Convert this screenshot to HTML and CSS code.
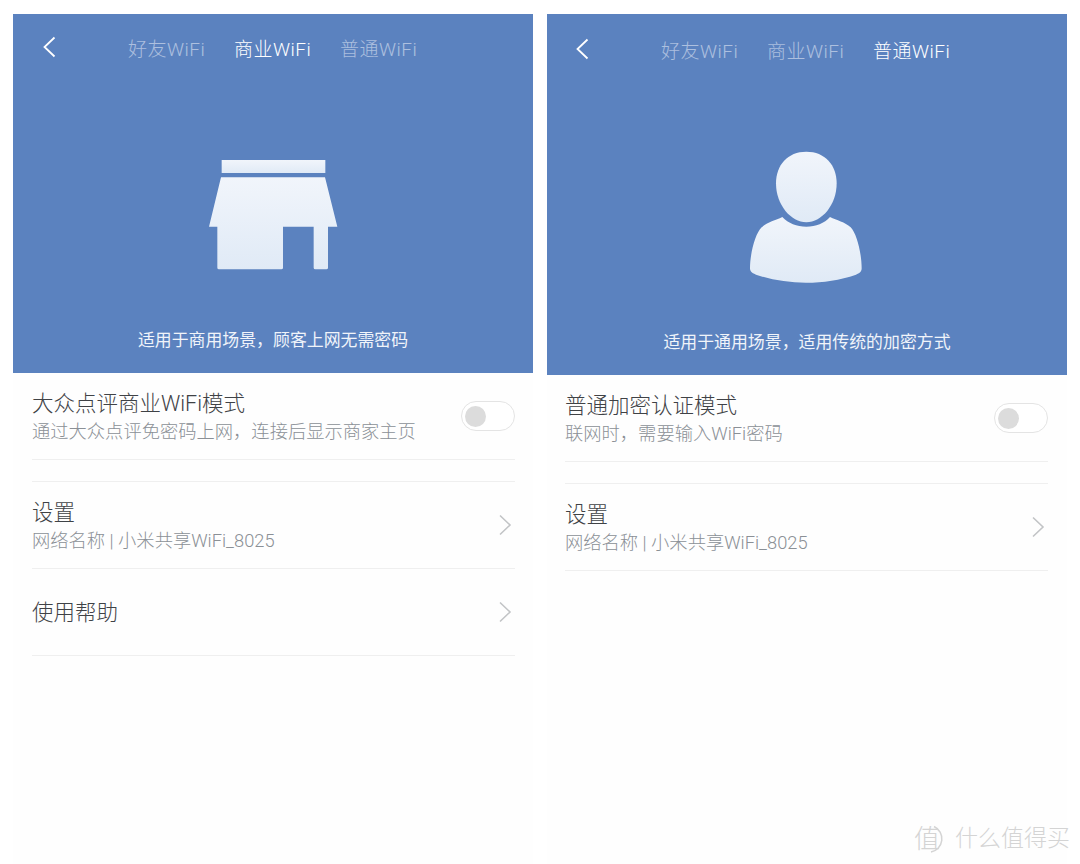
FILE: index.html
```html
<!DOCTYPE html>
<html lang="zh-CN">
  <head>
    <title>小米共享WiFi</title>
    <meta charset="UTF-8" />
    <link rel="stylesheet" href="styles.css">
  </head>
  <body>
    <svg class="defs" width="0" height="0">
      <defs>
        <linearGradient id="iconFill" x1="0" y1="0" x2="0" y2="1">
          <stop offset="0" stop-color="#f1f5fb" />
          <stop offset="1" stop-color="#e0eaf6" />
        </linearGradient>
      </defs>
    </svg>

    <section class="panel">
      <header class="hero">
        <nav class="tabs">
          <svg class="back" width="14" height="22" viewBox="0 0 14 22"><path d="M12.5 1.5 L2.5 11 L12.5 20.5" /></svg>
          <a class="tab">好友WiFi</a>
          <a class="tab active">商业WiFi</a>
          <a class="tab">普通WiFi</a>
        </nav>
        <svg class="hero-icon store-icon" width="170" height="150" viewBox="0 0 510 450">
          <rect x="95" y="60" width="311" height="39" fill="url(#iconFill)" />
          <path fill="url(#iconFill)" d="M93 112 H405 L442 260 H414 V383 Q414 388 409 388 H376 Q371 388 371 383 V260 H279 V383 Q279 388 274 388 H87 Q82 388 82 383 V260 H57 Z" />
        </svg>
        <p class="caption">适用于商用场景，顾客上网无需密码</p>
      </header>
      <div class="list">
        <div class="row">
          <div class="row-text">
            <div class="row-title">大众点评商业WiFi模式</div>
            <div class="row-sub">通过大众点评免密码上网，连接后显示商家主页</div>
          </div>
          <span class="switch"><span class="knob"></span></span>
        </div>
        <div class="row row-gap">
          <div class="row-text">
            <div class="row-title">设置</div>
            <div class="row-sub">网络名称 | 小米共享WiFi_8025</div>
          </div>
          <svg class="chevron" width="14" height="22" viewBox="0 0 14 22"><path d="M2 1.5 L12 11 L2 20.5" /></svg>
        </div>
        <div class="row">
          <div class="row-text">
            <div class="row-title">使用帮助</div>
          </div>
          <svg class="chevron" width="14" height="22" viewBox="0 0 14 22"><path d="M2 1.5 L12 11 L2 20.5" /></svg>
        </div>
      </div>
    </section>

    <section class="panel panel-tall">
      <header class="hero">
        <nav class="tabs">
          <svg class="back" width="14" height="22" viewBox="0 0 14 22"><path d="M12.5 1.5 L2.5 11 L12.5 20.5" /></svg>
          <a class="tab">好友WiFi</a>
          <a class="tab">商业WiFi</a>
          <a class="tab active">普通WiFi</a>
        </nav>
        <svg class="hero-icon person-icon" width="150" height="150" viewBox="0 0 450 450">
          <path fill="url(#iconFill)" d="M229 35 C285 35 320 75 320 130 C320 195 275 247 229 247 C183 247 138 195 138 130 C138 75 173 35 229 35 Z" />
          <path fill="url(#iconFill)" d="M157 231 C175 250 200 260 229 260 C258 260 283 250 300 231 C320 241 345 246 362 262 C380 280 395 340 395 385 C395 396 388 400 378 404 C330 420 280 428 228 428 C176 428 125 420 78 404 C68 400 60 396 60 385 C60 340 76 280 95 262 C112 246 137 241 157 231 Z" />
        </svg>
        <p class="caption">适用于通用场景，适用传统的加密方式</p>
      </header>
      <div class="list">
        <div class="row">
          <div class="row-text">
            <div class="row-title">普通加密认证模式</div>
            <div class="row-sub">联网时，需要输入WiFi密码</div>
          </div>
          <span class="switch"><span class="knob"></span></span>
        </div>
        <div class="row row-gap">
          <div class="row-text">
            <div class="row-title">设置</div>
            <div class="row-sub">网络名称 | 小米共享WiFi_8025</div>
          </div>
          <svg class="chevron" width="14" height="22" viewBox="0 0 14 22"><path d="M2 1.5 L12 11 L2 20.5" /></svg>
        </div>
      </div>
    </section>

    <div class="watermark">
      <span class="mark">值<svg class="mark-arc" width="30" height="30" viewBox="0 0 30 30"><path d="M20 2.5 A13.5 13.5 0 0 1 17 28" /></svg></span>
      <span>什么值得买</span>
    </div>
  </body>
</html>
```
FILE: styles.css
```css
html, body {
  margin: 0;
  padding: 0;
  height: 100%;
  overflow: hidden;
  background-color: white;
}
body {
  display: flex;
  gap: 14px;
  padding: 14px 13px 0;
  box-sizing: border-box;
  font-family: "Roboto", "Noto Sans CJK SC", sans-serif;
}
.defs {
  position: absolute;
}
.panel {
  width: 520px;
  background: #fefefe;
}
.hero {
  height: 359px;
  background: #5b82bf;
  display: flex;
  flex-direction: column;
  align-items: center;
}
.panel-tall .hero {
  height: 361px;
}
.tabs {
  align-self: stretch;
  height: 70px;
  box-sizing: border-box;
  padding-left: 29px;
  padding-bottom: 4px;
  display: flex;
  align-items: center;
  color: white;
}
.panel-tall .tabs {
  height: 74px;
  padding-left: 28px;
}
.back {
  margin-right: 72px;
  fill: none;
  stroke: white;
  stroke-width: 1.8;
}
.tab {
  width: 77px;
  margin-right: 29px;
  font-size: 19px;
  font-weight: 300;
  letter-spacing: 0.5px;
  white-space: nowrap;
  color: rgba(255, 255, 255, 0.5);
}
.tab.active {
  color: white;
}
.hero-icon {
  margin-top: 56px;
  flex: none;
}
.store-icon {
  margin-left: 4px;
}
.person-icon {
  margin-top: 52px;
  margin-right: 4px;
}
.caption {
  margin: 36px 0 0;
  font-size: 16.9px;
  line-height: 28px;
  color: #f0f4fa;
}
.panel-tall .caption {
  margin-top: 38px;
}
.list {
  padding: 0 18px 0 19px;
}
.panel-tall .list {
  padding: 0 19px 0 18px;
}
.row {
  height: 87px;
  box-sizing: border-box;
  border-bottom: 1px solid #efefef;
  display: flex;
  align-items: center;
  justify-content: space-between;
}
.row-gap {
  margin-top: 21px;
  border-top: 1px solid #efefef;
  height: 88px;
}
.row-text {
  padding-top: 2px;
}
.row-title {
  font-size: 21.5px;
  font-weight: 300;
  line-height: 30px;
  color: #3f4246;
}
.row-sub {
  font-size: 18.3px;
  font-weight: 300;
  line-height: 26px;
  color: #8b9096;
}
.switch {
  width: 54px;
  height: 30px;
  box-sizing: border-box;
  border: 1px solid #e4e4e4;
  border-radius: 15px;
  background: white;
  display: flex;
  align-items: center;
  padding-left: 3px;
}
.knob {
  width: 21px;
  height: 21px;
  border-radius: 50%;
  background: #dcdcdc;
}
.chevron {
  margin-right: 3px;
  fill: none;
  stroke: #c2c4c6;
  stroke-width: 1.6;
}
/* stamp sitting over the bottom corner of the second screen */
.watermark {
  position: absolute;
  left: 914px;
  top: 824px;
  display: flex;
  align-items: center;
  gap: 13px;
  font-size: 23px;
  font-weight: 300;
  line-height: 30px;
  color: #d4d4d4;
}
.mark {
  position: relative;
  width: 28px;
  font-size: 26px;
}
.mark-arc {
  position: absolute;
  left: 0;
  top: 0;
  fill: none;
  stroke: #d4d4d4;
  stroke-width: 1.5;
}
```
